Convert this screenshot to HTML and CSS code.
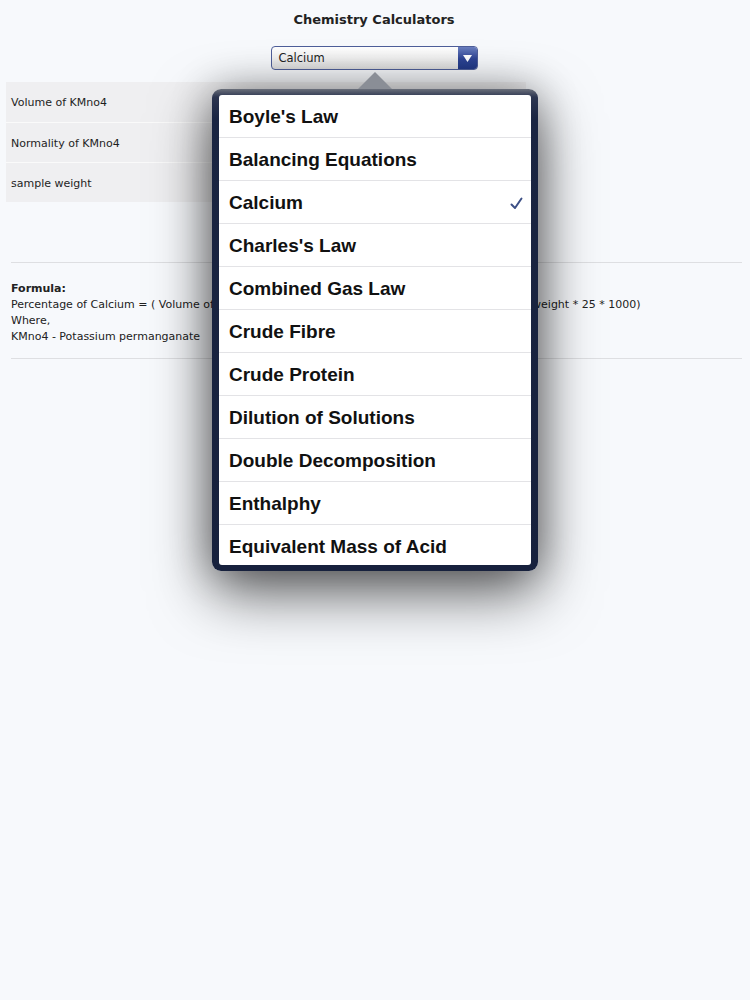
FILE: index.html
```html
<!DOCTYPE html>
<html>
<head>
<meta charset="utf-8">
<link rel="stylesheet" href="styles.css">
</head>
<body>
<div class="page">
  <h1 class="title">Chemistry Calculators</h1>
  <div class="select-row">
    <div class="select">
      <span class="select-value">Calcium</span>
      <span class="select-btn"><svg width="9" height="7" viewBox="0 0 9 7"><path d="M0 0 H9 L4.5 7 Z" fill="#fff"/></svg></span>
    </div>
  </div>
  <div class="form">
    <div class="form-row">Volume of KMno4</div>
    <div class="form-row">Normality of KMno4</div>
    <div class="form-row">sample weight</div>
  </div>
  <div class="formula">
    <div class="formula-title">Formula:</div>
    <div>Percentage of Calcium = ( Volume of KMno4 * Normality of KMno4 * 0.2 * 10 * 100 ) / (sample weight * 25 * 1000)</div>
    <div>Where,</div>
    <div>KMno4 - Potassium permanganate</div>
  </div>

  <div class="popover">
    <div class="popover-arrow"></div>
    <ul class="list">
      <li>Boyle's Law</li>
      <li>Balancing Equations</li>
      <li class="checked">Calcium<svg class="check" width="13" height="13" viewBox="0 0 13 13"><path d="M1.5 7.5 L5 11 L11.5 1.5" fill="none" stroke="#3d5086" stroke-width="2" stroke-linecap="round" stroke-linejoin="round"/></svg></li>
      <li>Charles's Law</li>
      <li>Combined Gas Law</li>
      <li>Crude Fibre</li>
      <li>Crude Protein</li>
      <li>Dilution of Solutions</li>
      <li>Double Decomposition</li>
      <li>Enthalphy</li>
      <li>Equivalent Mass of Acid</li>
    </ul>
  </div>
</div>
</body>
</html>
```

FILE: styles.css
```css
html, body {
  margin: 0;
  padding: 0;
  background: #f7f9fc;
}
body {
  font-family: "DejaVu Sans", Tahoma, sans-serif;
  color: #1e1e1e;
  width: 750px;
  height: 1000px;
  overflow: hidden;
}
.page {
  position: relative;
  padding: 12px 8px 0 6px;
}
.title {
  margin: 0;
  font-size: 13px;
  font-weight: bold;
  text-align: center;
  line-height: 16px;
  color: #222;
}
.select-row {
  display: flex;
  justify-content: center;
  margin-top: 18px;
}
.select {
  width: 205px;
  height: 22px;
  border: 1px solid #4f5f9a;
  border-radius: 4px;
  background: linear-gradient(#ffffff, #f1f1f1 50%, #dcdcdc);
  display: flex;
  align-items: center;
  overflow: hidden;
}
.select-value {
  flex: 1;
  padding-left: 7px;
  font-size: 11.5px;
  color: #222;
}
.select-btn {
  width: 19px;
  height: 22px;
  background: linear-gradient(#6b7fc0, #2d4494 55%, #233a88);
  display: flex;
  align-items: center;
  justify-content: center;
}
.form {
  margin-top: 12px;
  width: 520px;
  background: #efeff1;
}
.form-row {
  height: 40px;
  line-height: 42px;
  padding-left: 5px;
  font-size: 11px;
  border-top: 1px solid #fafafa;
  box-sizing: border-box;
}
.form-row:first-child {
  border-top: none;
}
.formula {
  margin: 60px 0 0 5px;
  border-top: 1px solid #dedfe2;
  border-bottom: 1px solid #dedfe2;
  padding: 18px 0 13px 0;
  font-size: 11px;
  line-height: 16px;
  color: #222;
}
.formula-title {
  font-weight: bold;
}
.popover {
  position: absolute;
  left: 212px;
  top: 89px;
  width: 326px;
  height: 482px;
  box-sizing: border-box;
  padding: 6px 7px 6px 7px;
  border-radius: 9px;
  background: linear-gradient(#6a6f7a 0px, #2c3550 8px, #1a2542 30px, #17213d);
  box-shadow: 0 22px 60px rgba(0, 0, 0, 0.6), 0 0 40px rgba(0, 0, 0, 0.3);
}
.popover-arrow {
  position: absolute;
  left: 146px;
  top: -17px;
  width: 0;
  height: 0;
  border-left: 17px solid transparent;
  border-right: 17px solid transparent;
  border-bottom: 17px solid #8a8e96;
}
.list {
  list-style: none;
  margin: 0;
  padding: 0;
  background: #fff;
  height: 100%;
  overflow: hidden;
  border-radius: 3px;
}
.list li {
  height: 43px;
  box-sizing: border-box;
  border-bottom: 1px solid #e3e3e6;
  padding: 2px 10px 0 10px;
  display: flex;
  align-items: center;
  justify-content: space-between;
  font-family: "Liberation Sans", Arial, sans-serif;
  font-weight: bold;
  font-size: 19px;
  color: #111;
}
.check {
  margin-right: -2px;
}
```
